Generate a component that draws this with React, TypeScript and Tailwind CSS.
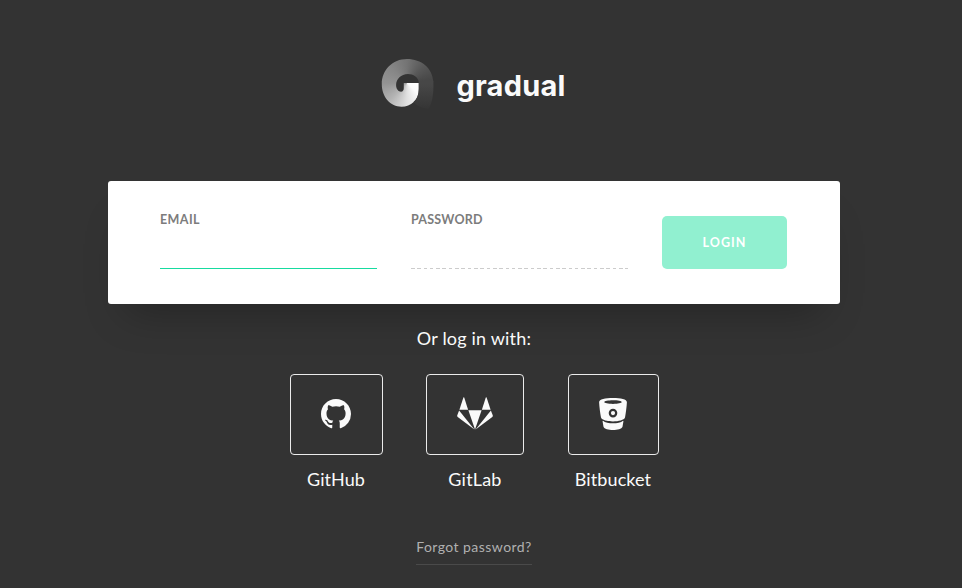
import type { ReactNode } from "react";

function LogoMark() {
  return (
    <div className="relative h-[50px] w-[53px]">
      <div className="absolute inset-0 bg-[conic-gradient(from_90deg_at_26px_24px,#ffffff_0deg,#fafafa_45deg,#e0e0e0_90deg,#b4b4b4_135deg,#939393_180deg,#868686_225deg,#747474_270deg,#585858_315deg,#474747_352deg,#474747_360deg)] [clip-path:path('M22.3_24H37.3V30C37.3_41_29.5_47.7_20_47.7C9_47.7_0.3_38_0.3_25C0.3_11_11_0_25.5_0C40_0_51_9_51.9_23H37.3C36.5_18_32_15_26.5_15C19.5_15_14.6_20_14.6_26C14.6_30_17_32.7_19.5_32.7C21.5_32.7_22.3_31_22.3_29Z')]" />
      <div className="absolute inset-0 bg-linear-to-b from-[#474747] from-50% to-[#353535] [clip-path:path('M37.3_22.5H51.9C52.3_35_51_43_47_50C40_49_34_46_32_43C36_40_37.3_35_37.3_30Z')]" />
    </div>
  );
}

function GitHubIcon() {
  return (
    <svg width="30" height="30" viewBox="0 0 16 16" fill="currentColor">
      <path d="M8 0C3.58 0 0 3.58 0 8c0 3.54 2.29 6.53 5.47 7.59.4.07.55-.17.55-.38 0-.19-.01-.82-.01-1.49-2.01.37-2.53-.49-2.69-.94-.09-.23-.48-.94-.82-1.13-.28-.15-.68-.52-.01-.53.63-.01 1.08.58 1.23.82.72 1.21 1.87.87 2.33.66.07-.52.28-.87.51-1.07-1.78-.2-3.64-.89-3.64-3.95 0-.87.31-1.59.82-2.15-.08-.2-.36-1.02.08-2.12 0 0 .67-.21 2.2.82.64-.18 1.32-.27 2-.27s1.36.09 2 .27c1.53-1.04 2.2-.82 2.2-.82.44 1.1.16 1.92.08 2.12.51.56.82 1.27.82 2.15 0 3.07-1.87 3.75-3.65 3.95.29.25.54.73.54 1.48 0 1.07-.01 1.93-.01 2.2 0 .21.15.46.55.38A8.01 8.01 0 0 0 16 8c0-4.42-3.58-8-8-8Z" />
    </svg>
  );
}

function GitLabIcon() {
  return (
    <svg width="36" height="33" viewBox="0 0 36 33" fill="currentColor">
      <path d="M6.4.6 2.4 12.700h8.700L7.200.6Q6.800-.3 6.400.6Z" />
      <path d="M29.600.6 33.600 12.700h-8.700L28.800.6Q29.200-.3 29.600.6Z" />
      <path d="M11.400 13.200H24.600L18 32.500Z" />
      <path d="M2.100 13.500.2 18.600Q0 19.400.7 20L17.400 32.500Z" />
      <path d="M33.900 13.500 35.800 18.600Q36 19.400 35.300 20L18.600 32.500Z" />
    </svg>
  );
}

function BitbucketIcon() {
  return (
    <svg width="28" height="32" viewBox="0 0 28 32" fill="currentColor">
      <path
        fillRule="evenodd"
        d="M.1 4.200C.1 1.200 6.200 0 14 0s13.900 1.200 13.900 4.200C27.700 9 26.700 15.500 26 19.500 25.200 22 19.500 23.400 14 23.400S2.800 22 2 19.500C1.300 15.500.3 9 .1 4.200ZM14 2.300c-5 0-8.700.7-8.700 1.800S9 5.900 14 5.900s8.700-.7 8.700-1.800S19 2.300 14 2.300ZM14 10.800a4.300 4.300 0 1 0 0 8.600 4.300 4.300 0 0 0 0-8.600Z"
      />
      <circle cx="14" cy="15.1" r="2.1" />
      <path d="M4 22.700C6 24.500 10 25.300 14 25.300s8-.8 10-2.600c.4 0 .5.200.4.700L23.500 28.800C22.700 31 18.500 32 14 32S5.300 31 4.500 28.800L3.600 23.400c-.1-.5 0-.7.400-.7Z" />
    </svg>
  );
}

function Provider({ name, box, label, children }: { name: string; box: string; label: string; children: ReactNode }) {
  return (
    <div className="flex flex-col items-center">
      <button className={`flex h-[80.5px] items-center justify-center rounded-[4px] border border-white/90 pb-px ${box}`}>
        {children}
      </button>
      <span className={`mt-[11px] text-[18px] leading-[26px] whitespace-nowrap ${label}`}>{name}</span>
    </div>
  );
}

export default function App() {
  return (
    <main className="h-[588px] w-full overflow-hidden bg-[#333333] font-['Lato','Noto_Sans',sans-serif] text-[#fafafa]">
      <div className="flex w-[948px] flex-col items-center pt-[59px]">
        <header className="flex h-[50px] items-start gap-[22px]">
          <LogoMark />
          <span className="mt-[7px] mr-px font-['Inter',sans-serif] text-[29px] leading-[40px] font-bold tracking-[0.2px] text-[#fafafa]">gradual</span>
        </header>

        <form className="mt-[72px] flex h-[123px] w-[732px] items-start rounded-[3px] bg-white px-[52px] shadow-[0_26px_40px_-18px_rgba(0,0,0,0.28)]">
          <label className="mt-[31px] flex h-[57px] w-[217px] flex-col border-b border-[#17dba0] text-[#7c7c7c]">
            <span className="text-[12.5px] leading-[16px] font-bold tracking-[0.4px]">EMAIL</span>
          </label>
          <label className="mt-[31px] ml-[34px] flex h-[57px] w-[217px] flex-col text-[#7c7c7c]">
            <span className="text-[12.5px] leading-[16px] font-bold tracking-[0.2px]">PASSWORD</span>
            <span className="mt-auto h-px w-full bg-[repeating-linear-gradient(90deg,#cccccc_0px,#cccccc_3.6px,transparent_3.6px,transparent_6.3px)]" />
          </label>
          <button className="mt-[35px] ml-[34px] h-[53px] w-[125px] rounded-[5px] bg-[#91f0d0] pt-px text-[12.5px] font-bold tracking-[1.1px] text-white">LOGIN</button>
        </form>

        <p className="mt-[21px] text-[18px] leading-[26px] tracking-[0.2px]">Or log in with:</p>

        <div className="mt-[23px] flex items-start gap-[43.5px]">
          <Provider name="GitHub" box="w-[93px]" label="tracking-[0.05px]"><GitHubIcon /></Provider>
          <Provider name="GitLab" box="w-[98px]" label="tracking-[0.2px]"><GitLabIcon /></Provider>
          <Provider name="Bitbucket" box="w-[91px]" label="tracking-[0.1px]"><BitbucketIcon /></Provider>
        </div>

        <a className="mt-[43.5px] flex h-[30px] items-start border-b border-[#4a4a4a] text-[14px] leading-[24px] tracking-[0.45px] text-[#b0b0b0]">Forgot password?</a>
      </div>
    </main>
  );
}
